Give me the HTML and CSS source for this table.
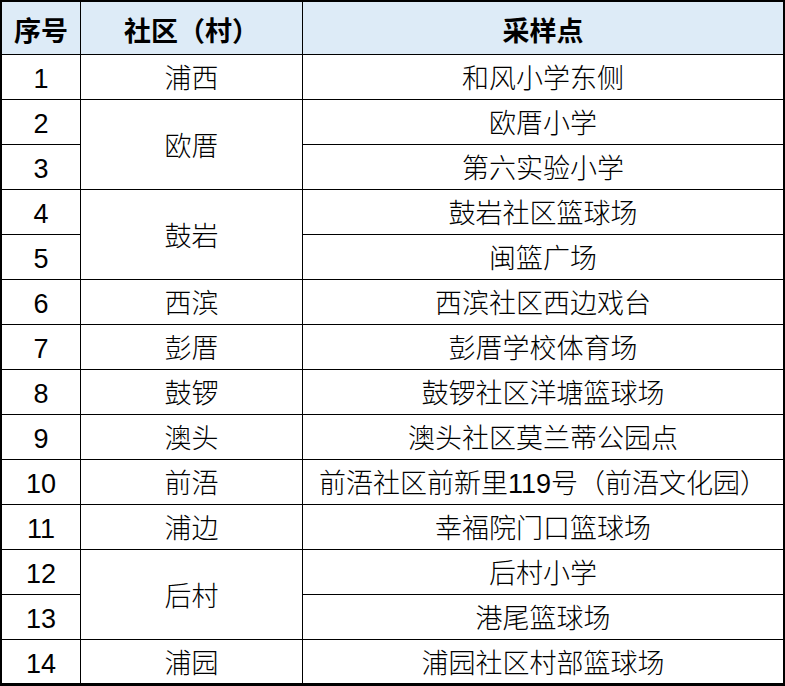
FILE: index.html
```html
<!DOCTYPE html>
<html lang="zh-CN">
<head>
<meta charset="utf-8">
<title>采样点</title>
<link rel="stylesheet" href="styles.css">
</head>
<body>
<div class="sheet">
  <div class="cell head">序号</div>
  <div class="cell head">社区（村）</div>
  <div class="cell head end">采样点</div>

  <div class="cell">1</div>
  <div class="cell">浦西</div>
  <div class="cell end">和风小学东侧</div>

  <div class="cell">2</div>
  <div class="cell span2">欧厝</div>
  <div class="cell end">欧厝小学</div>
  <div class="cell">3</div>
  <div class="cell end">第六实验小学</div>

  <div class="cell">4</div>
  <div class="cell span2">鼓岩</div>
  <div class="cell end">鼓岩社区篮球场</div>
  <div class="cell">5</div>
  <div class="cell end">闽篮广场</div>

  <div class="cell">6</div>
  <div class="cell">西滨</div>
  <div class="cell end">西滨社区西边戏台</div>

  <div class="cell">7</div>
  <div class="cell">彭厝</div>
  <div class="cell end">彭厝学校体育场</div>

  <div class="cell">8</div>
  <div class="cell">鼓锣</div>
  <div class="cell end">鼓锣社区洋塘篮球场</div>

  <div class="cell">9</div>
  <div class="cell">澳头</div>
  <div class="cell end">澳头社区莫兰蒂公园点</div>

  <div class="cell">10</div>
  <div class="cell">前浯</div>
  <div class="cell end">前浯社区前新里119号（前浯文化园）</div>

  <div class="cell">11</div>
  <div class="cell">浦边</div>
  <div class="cell end">幸福院门口篮球场</div>

  <div class="cell">12</div>
  <div class="cell span2">后村</div>
  <div class="cell end">后村小学</div>
  <div class="cell">13</div>
  <div class="cell end">港尾篮球场</div>

  <div class="cell last">14</div>
  <div class="cell last">浦园</div>
  <div class="cell last end">浦园社区村部篮球场</div>
</div>
</body>
</html>
```

FILE: styles.css
```css
html, body {
  margin: 0;
  padding: 0;
  background: #ffffff;
}

.sheet {
  width: 785px;
  height: 686px;
  box-sizing: border-box;
  border: 2px solid #000;
  border-bottom-width: 3px;
  display: grid;
  grid-template-columns: 79px 222px 1fr;
  grid-template-rows: 53px repeat(13, 45px) 1fr;
  font-family: "Liberation Sans", "Noto Sans CJK SC", sans-serif;
  font-size: 27px;
  font-weight: 300;
  color: #000;
}

.cell {
  box-sizing: border-box;
  border-right: 1px solid #000;
  border-bottom: 1px solid #000;
  display: flex;
  align-items: center;
  justify-content: center;
  white-space: nowrap;
  padding-top: 5px;
  line-height: 1;
}

.cell.end {
  border-right: none;
}

.cell.last {
  border-bottom: none;
}

.cell.span2 {
  grid-row: span 2;
}

.cell.head {
  background: #ddebf7;
  font-family: "Noto Sans CJK SC", sans-serif;
  font-weight: 700;
  padding-top: 3px;
}
```
